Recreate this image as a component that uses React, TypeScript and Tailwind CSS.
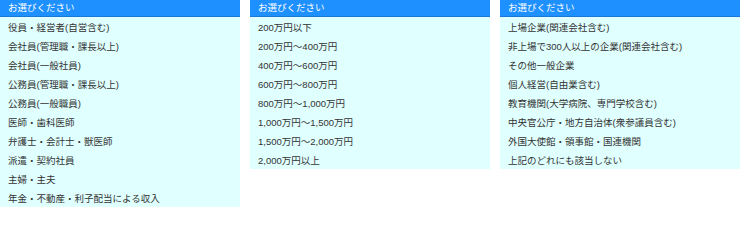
const OCCUPATIONS = [
  '役員・経営者(自営含む)',
  '会社員(管理職・課長以上)',
  '会社員(一般社員)',
  '公務員(管理職・課長以上)',
  '公務員(一般職員)',
  '医師・歯科医師',
  '弁護士・会計士・獣医師',
  '派遣・契約社員',
  '主婦・主夫',
  '年金・不動産・利子配当による収入',
]

const INCOMES = [
  '200万円以下',
  '200万円～400万円',
  '400万円～600万円',
  '600万円～800万円',
  '800万円～1,000万円',
  '1,000万円～1,500万円',
  '1,500万円～2,000万円',
  '2,000万円以上',
]

const EMPLOYERS = [
  '上場企業(関連会社含む)',
  '非上場で300人以上の企業(関連会社含む)',
  'その他一般企業',
  '個人経営(自由業含む)',
  '教育機関(大学病院、専門学校含む)',
  '中央官公庁・地方自治体(衆参議員含む)',
  '外国大使館・領事館・国連機関',
  '上記のどれにも該当しない',
]

function OptionList({ options }: { options: string[] }) {
  return (
    <div className="w-[240px] bg-[#e0ffff] self-start">
      <div className="h-[17px] bg-[#1e90ff] border-b border-[#1a78d8] text-white pl-2 flex items-center">
        お選びください
      </div>
      {options.map((opt) => (
        <div key={opt} className="h-[19px] pl-2 pt-[2px] flex items-center text-[#333] whitespace-nowrap">
          {opt}
        </div>
      ))}
    </div>
  )
}

export default function App() {
  return (
    <div
      className="w-[740px] h-[209px] overflow-hidden bg-white flex gap-[10px] text-[9.5px] leading-none"
      style={{ fontFamily: '"Liberation Sans", "Noto Sans CJK JP", sans-serif' }}
    >
      <OptionList options={OCCUPATIONS} />
      <OptionList options={INCOMES} />
      <OptionList options={EMPLOYERS} />
    </div>
  )
}
